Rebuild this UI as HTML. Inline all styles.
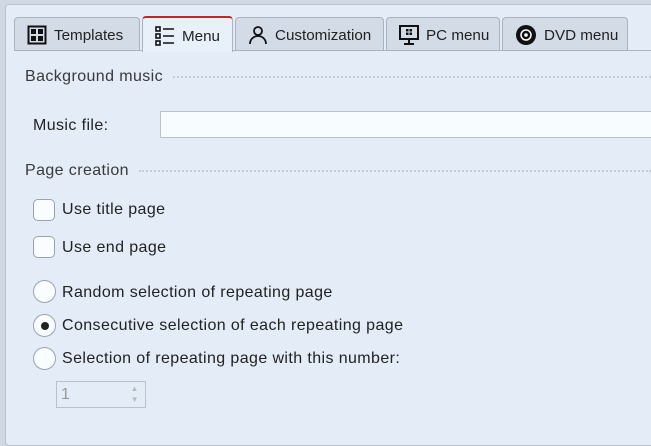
<!DOCTYPE html><html><head><style>
body{margin:0;width:651px;height:427px;overflow:hidden;background:#cfd8e3;font-family:"Liberation Sans",sans-serif;font-size:16px;letter-spacing:0.4px;color:#222;position:relative}
.panel{position:absolute;left:5px;top:4px;width:660px;height:440px;background:#e3ecf7;border:1px solid #b9c3cf;border-radius:4px}
.tab{position:absolute;top:17px;height:33px;background:#d2dbe6;border:1px solid #aab4c0;border-bottom:none;border-radius:4px 4px 0 0;box-sizing:border-box;display:flex;align-items:center;padding-left:12px;padding-top:2px;font-size:15.2px;letter-spacing:0;color:#222}
.tab svg{margin-right:7px}
.act{background:#e8f0fa;border-top:2px solid #c0282b;top:16px;height:36px;z-index:2}
.line{position:absolute;left:14px;right:0;top:50px;border-top:1px solid #aab4c0}
.h{position:absolute;left:25px;font-size:16px;color:#3a3a3a;display:flex;align-items:center;right:0}
.h span.d{flex:1;margin-left:10px;border-top:2px dotted #c3ccd8;height:0}
.t{position:absolute;white-space:nowrap}
.cb{position:absolute;left:33px;width:22px;height:22px;border:1px solid #9aa3ad;border-radius:5px;background:#fafdff;box-sizing:border-box}
.rb{position:absolute;left:33px;width:23px;height:23px;border:1px solid #9aa3ad;border-radius:50%;background:#fafdff;box-sizing:border-box}
</style></head><body>
<div class="panel"></div>
<div class="line"></div>
<div class="tab" style="left:14px;width:126px"><svg width="20" height="20" viewBox="0 0 20 20"><rect x="1.5" y="1.5" width="17" height="17" fill="none" stroke="#111" stroke-width="2"/><rect x="4" y="4" width="5" height="5" fill="#111"/><rect x="11" y="4" width="5" height="5" fill="#111"/><rect x="4" y="11" width="5" height="5" fill="#111"/><rect x="11" y="11" width="5" height="5" fill="#111"/></svg>Templates</div>
<div class="tab act" style="left:142px;width:91px"><svg width="20" height="20" viewBox="0 0 20 20" fill="none" stroke="#111" stroke-width="1.6"><rect x="1" y="1" width="4" height="4"/><rect x="1" y="8" width="4" height="4"/><rect x="1" y="15" width="4" height="4"/><path d="M8 3h11M8 10h11M8 17h11"/></svg>Menu</div>
<div class="tab" style="left:235px;width:149px"><svg width="20" height="20" viewBox="0 0 20 20" fill="none" stroke="#111" stroke-width="1.8"><circle cx="10" cy="6" r="4"/><path d="M2 19c0-5 4-8 8-8s8 3 8 8"/></svg>Customization</div>
<div class="tab" style="left:386px;width:114px"><svg width="20" height="20" viewBox="0 0 20 20"><rect x="1" y="1" width="18" height="13" fill="none" stroke="#111" stroke-width="2"/><path d="M10 14v4M5 19h10" stroke="#111" stroke-width="2"/><rect x="7" y="4" width="2.5" height="2.5" fill="#111"/><rect x="10.5" y="4" width="2.5" height="2.5" fill="#111"/><rect x="7" y="7.5" width="2.5" height="2.5" fill="#111"/><rect x="10.5" y="7.5" width="2.5" height="2.5" fill="#111"/></svg>PC menu</div>
<div class="tab" style="left:502px;width:126px"><svg width="22" height="22" viewBox="0 0 22 22"><circle cx="11" cy="11" r="10" fill="#111"/><circle cx="11" cy="11" r="5" fill="none" stroke="#fff" stroke-width="1.5"/><circle cx="11" cy="11" r="1.8" fill="#fff"/></svg>DVD menu</div>
<div class="h" style="top:68px">Background music<span class="d"></span></div>
<div class="t" style="left:33px;top:117px">Music file:</div>
<div style="position:absolute;left:160px;top:111px;width:500px;height:27px;border:1px solid #b8c1cc;background:#f7fcff;box-sizing:border-box"></div>
<div class="h" style="top:162px">Page creation<span class="d"></span></div>
<div class="cb" style="top:199px"></div><div class="t" style="left:62px;top:201px">Use title page</div>
<div class="cb" style="top:236px"></div><div class="t" style="left:62px;top:239px">Use end page</div>
<div class="rb" style="top:280px"></div><div class="t" style="left:62px;top:284px">Random selection of repeating page</div>
<div class="rb" style="top:314px"><div style="position:absolute;left:6.5px;top:6.5px;width:8px;height:8px;border-radius:50%;background:#222"></div></div><div class="t" style="left:62px;top:317px">Consecutive selection of each repeating page</div>
<div class="rb" style="top:347px"></div><div class="t" style="left:62px;top:350px">Selection of repeating page with this number:</div>
<div style="position:absolute;left:56px;top:381px;width:90px;height:27px;border:1px solid #b8c1cc;box-sizing:border-box;color:#999;padding:4px 0 0 4px;font-size:16px">1<span style="position:absolute;right:6px;top:1px;font-size:8px;color:#bbb;line-height:11px">▲<br>▼</span></div>
</body></html>
